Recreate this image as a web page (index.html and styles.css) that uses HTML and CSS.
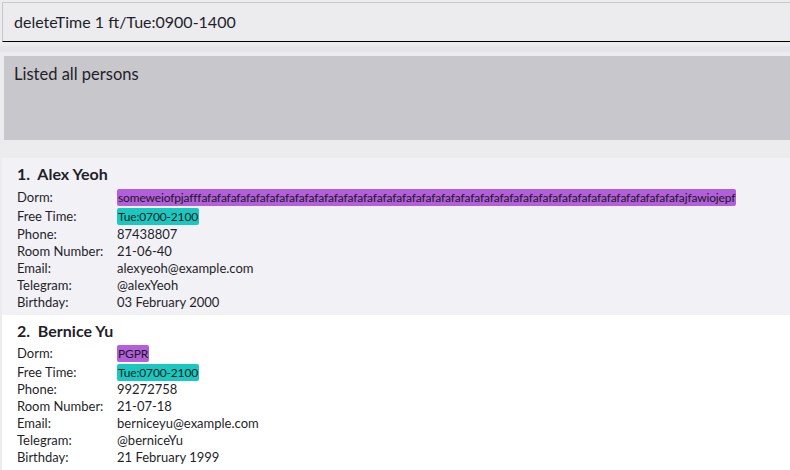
FILE: index.html
```html
<!DOCTYPE html>
<html>
<head>
<meta charset="utf-8">
<link rel="stylesheet" href="styles.css">
</head>
<body>
<div class="command">deleteTime 1 ft/Tue:0900-1400</div>
<div class="result-wrap">
  <div class="result">Listed all persons</div>
</div>
<div class="list">
  <div class="card tinted">
    <div class="name">1.&nbsp;&nbsp;Alex Yeoh</div>
    <div class="row tagrow first"><span class="label">Dorm:</span><span class="tag dorm">someweiofpjafffafafafafafafafafafafafafafafafafafafafafafafafafafafafafafafafafafafafafafafafafafafafafafafafafafajfawiojepf</span></div>
    <div class="row tagrow"><span class="label">Free Time:</span><span class="tag time">Tue:0700-2100</span></div>
    <div class="row"><span class="label">Phone:</span><span class="val">87438807</span></div>
    <div class="row"><span class="label">Room Number:</span><span class="val">21-06-40</span></div>
    <div class="row"><span class="label">Email:</span><span class="val">alexyeoh@example.com</span></div>
    <div class="row"><span class="label">Telegram:</span><span class="val">@alexYeoh</span></div>
    <div class="row"><span class="label">Birthday:</span><span class="val">03 February 2000</span></div>
  </div>
  <div class="card white">
    <div class="name">2.&nbsp;&nbsp;Bernice Yu</div>
    <div class="row tagrow first"><span class="label">Dorm:</span><span class="tag dorm">PGPR</span></div>
    <div class="row tagrow"><span class="label">Free Time:</span><span class="tag time">Tue:0700-2100</span></div>
    <div class="row"><span class="label">Phone:</span><span class="val">99272758</span></div>
    <div class="row"><span class="label">Room Number:</span><span class="val">21-07-18</span></div>
    <div class="row"><span class="label">Email:</span><span class="val">berniceyu@example.com</span></div>
    <div class="row"><span class="label">Telegram:</span><span class="val">@berniceYu</span></div>
    <div class="row"><span class="label">Birthday:</span><span class="val">21 February 1999</span></div>
  </div>
</div>
</body>
</html>
```
FILE: styles.css
```css
html, body {
  margin: 0;
  padding: 0;
  background: #ececef;
  font-family: "Lato", "Noto Sans", sans-serif;
  color: #1f1f2a;
  overflow: hidden;
}
.command {
  margin: 2px 0 0 2px;
  box-sizing: border-box;
  height: 40px;
  border-top: 1px solid #c9c9cd;
  border-left: 1px solid #c9c9cd;
  border-bottom: 1px solid #000;
  padding: 9px 0 0 11px;
  font-size: 16px;
  background: #ececef;
}
.result-wrap {
  padding: 14px 0 18px 4px;
  background: linear-gradient(#ececef 0, #ececef 4px, #e6e6ea 4px, #e6e6ea 10px, #ececef 10px);
}
.result {
  height: 84px;
  box-sizing: border-box;
  background: #c8c7cc;
  padding: 8px 0 0 10px;
  font-size: 16.5px;
}
.list {
  margin-left: 2px;
}
.card {
  background: #f2f1f6;
  padding: 6px 0 6px 15px;
  font-size: 13px;
}
.card.tinted {
  padding-bottom: 4px;
}
.card.tinted .name {
  margin-bottom: 4px;
}
.card.tinted .tagrow {
  height: 19px;
}
.card.white {
  background: #ffffff;
}
.name {
  font-size: 16px;
  font-weight: bold;
  line-height: 20px;
  margin-bottom: 3px;
}
.row {
  display: flex;
  align-items: center;
  line-height: 17px;
  height: 17px;
}
.row.tagrow {
  height: 18px;
}
.row.tagrow.first {
  height: 19px;
}
.label {
  width: 100px;
  flex: none;
}
.tag {
  font-size: 12px;
  line-height: 17px;
  padding: 0 1px;
  letter-spacing: -0.15px;
  border-radius: 2px;
  color: #1a1a1a;
}
.dorm {
  background: #b35fdc;
}
.time {
  background: #19c9c1;
}
```
